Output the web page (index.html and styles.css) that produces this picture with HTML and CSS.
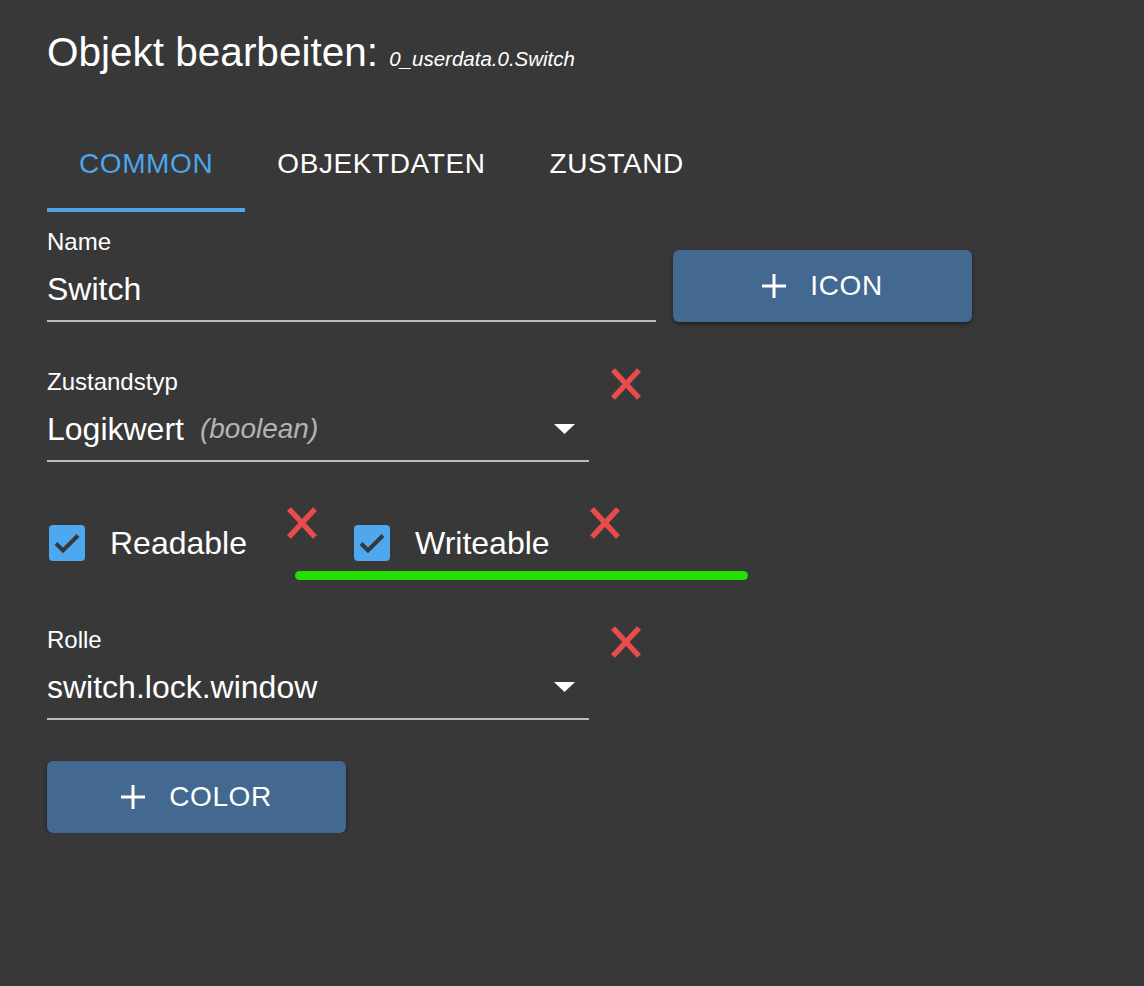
FILE: index.html
```html
<!DOCTYPE html>
<html>
<head>
    <title>Objekt bearbeiten</title>
    <link rel="stylesheet" href="styles.css">
</head>
<body>
    <div class="dialog">
        <h1 class="title">Objekt bearbeiten: <span class="object-id">0_userdata.0.Switch</span></h1>

        <div class="tabs">
            <div class="tab active">COMMON</div>
            <div class="tab">OBJEKTDATEN</div>
            <div class="tab">ZUSTAND</div>
        </div>

        <div class="name-row">
            <div class="field name-field">
                <div class="field-label">Name</div>
                <div class="field-value">Switch</div>
            </div>
            <button type="button" class="add-button">
                <svg class="plus" width="24" height="24" viewBox="0 0 24 24"><path d="M12 0v24M0 12h24" stroke="#fff" stroke-width="3"/></svg>
                <span>ICON</span>
            </button>
        </div>

        <div class="select-row type-row">
            <div class="field select-field">
                <div class="field-label">Zustandstyp</div>
                <div class="field-value">
                    <span>Logikwert</span>
                    <span class="hint">(boolean)</span>
                    <svg class="arrow" width="21" height="10" viewBox="0 0 21 10"><path d="M0 0h21L10.5 10z" fill="#fff"/></svg>
                </div>
            </div>
            <svg class="remove" width="32" height="34" viewBox="0 0 32 34"><path d="M3 3l26 28M29 3L3 31" stroke="#e84c4c" stroke-width="5.5"/></svg>
        </div>

        <div class="check-row">
            <label class="check-item">
                <svg class="checkbox" width="36" height="36" viewBox="0 0 36 36"><rect width="36" height="36" rx="4" fill="#4da8ef"/><path d="M7 18.5l7 7L29 10.5" stroke="#383838" stroke-width="4" fill="none"/></svg>
                <span>Readable</span>
            </label>
            <svg class="remove check-remove" width="32" height="34" viewBox="0 0 32 34"><path d="M3 3l26 28M29 3L3 31" stroke="#e84c4c" stroke-width="5.5"/></svg>
            <label class="check-item">
                <svg class="checkbox" width="36" height="36" viewBox="0 0 36 36"><rect width="36" height="36" rx="4" fill="#4da8ef"/><path d="M7 18.5l7 7L29 10.5" stroke="#383838" stroke-width="4" fill="none"/></svg>
                <span>Writeable</span>
            </label>
            <svg class="remove check-remove" width="32" height="34" viewBox="0 0 32 34"><path d="M3 3l26 28M29 3L3 31" stroke="#e84c4c" stroke-width="5.5"/></svg>
        </div>
        <div class="highlight"></div>

        <div class="select-row role-row">
            <div class="field select-field">
                <div class="field-label">Rolle</div>
                <div class="field-value">
                    <span>switch.lock.window</span>
                    <svg class="arrow" width="21" height="10" viewBox="0 0 21 10"><path d="M0 0h21L10.5 10z" fill="#fff"/></svg>
                </div>
            </div>
            <svg class="remove" width="32" height="34" viewBox="0 0 32 34"><path d="M3 3l26 28M29 3L3 31" stroke="#e84c4c" stroke-width="5.5"/></svg>
        </div>

        <button type="button" class="add-button color-button">
            <svg class="plus" width="24" height="24" viewBox="0 0 24 24"><path d="M12 0v24M0 12h24" stroke="#fff" stroke-width="3"/></svg>
            <span>COLOR</span>
        </button>
    </div>
</body>
</html>
```

FILE: styles.css
```css
body {
    margin: 0;
    padding: 0;
    background-color: #383838;
    color: #fff;
    font-family: "Liberation Sans", Arial, sans-serif;
}
.dialog {
    padding: 0 0 0 47px;
}
.title {
    margin: 32px 0 0;
    font-size: 40.5px;
    font-weight: normal;
    line-height: 40px;
}
.object-id {
    font-size: 20.5px;
    font-style: italic;
}
.tabs {
    display: flex;
    margin-top: 43px;
}
.tab {
    padding: 28px 32px 30px;
    font-size: 28px;
    line-height: 28px;
    letter-spacing: 0.6px;
    border-bottom: 4px solid transparent;
}
.tab.active {
    color: #4ca6e8;
    border-bottom-color: #4ca6e8;
}
.field-label {
    font-size: 24px;
    line-height: 24px;
}
.field-value {
    display: flex;
    align-items: center;
    margin-top: 19px;
    padding-bottom: 15px;
    font-size: 32px;
    line-height: 32px;
    border-bottom: 2px solid #bdbdbd;
}
.name-row {
    display: flex;
    align-items: flex-end;
    gap: 17px;
    margin-top: 18px;
}
.name-field {
    width: 609px;
}
.add-button {
    display: flex;
    align-items: center;
    justify-content: center;
    gap: 24px;
    width: 299px;
    height: 72px;
    padding: 0;
    border: none;
    border-radius: 6px;
    background: #436991;
    color: #fff;
    font-family: "Liberation Sans", Arial, sans-serif;
    font-size: 28px;
    letter-spacing: 0.6px;
    box-shadow: 0 2px 4px rgba(0, 0, 0, 0.45);
    cursor: pointer;
}
.select-row {
    display: flex;
    align-items: flex-start;
    gap: 21px;
}
.type-row {
    margin-top: 48px;
}
.role-row {
    margin-top: 48px;
}
.select-field {
    width: 542px;
}
.hint {
    margin-left: 16px;
    font-size: 28px;
    font-style: italic;
    color: #b3b3b3;
}
.arrow {
    margin-left: auto;
    margin-right: 14px;
}
.remove {
    margin-top: -3px;
}
.check-row {
    display: flex;
    align-items: flex-start;
    margin-top: 44px;
}
.check-item {
    display: flex;
    align-items: center;
    margin-top: 19px;
    font-size: 32px;
    line-height: 36px;
}
.checkbox {
    margin-left: 2px;
    margin-right: 25px;
}
.check-row .check-remove {
    margin: 0 34px 0 39px;
}
.highlight {
    width: 453px;
    height: 9px;
    margin: 10px 0 0 248px;
    border-radius: 5px;
    background: #22e000;
}
.color-button {
    margin-top: 41px;
}
```
